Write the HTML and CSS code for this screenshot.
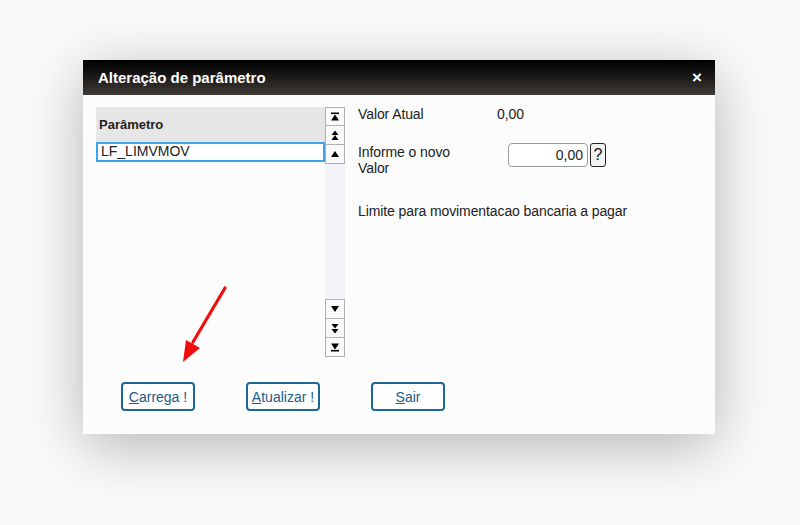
FILE: index.html
```html
<!DOCTYPE html>
<html>
  <head>
    <title>Alteração de parâmetro</title>
    <link rel="stylesheet" href="styles.css">
  </head>
  <body>
    <div class="dialog">
      <div class="titlebar">
        <span class="title">Alteração de parâmetro</span>
        <span class="close">&times;</span>
      </div>

      <div class="content">
        <div class="main">
          <div class="list">
            <div class="grid">
              <div class="grid-head">Parâmetro</div>
              <div class="grid-row selected">LF_LIMVMOV</div>
            </div>
            <div class="scroller">
              <div class="sbtn">
                <svg width="10" height="10" viewBox="0 0 10 10"><rect x="1" y="0.5" width="8" height="1.6"/><path d="M5 2.5 L9 8.5 H1 Z"/></svg>
              </div>
              <div class="sbtn">
                <svg width="10" height="11" viewBox="0 0 10 11"><path d="M5 0.5 L8.5 5 H1.5 Z"/><path d="M5 5 L8.5 10 H1.5 Z"/></svg>
              </div>
              <div class="sbtn">
                <svg width="10" height="8" viewBox="0 0 10 8"><path d="M5 1 L9 7 H1 Z"/></svg>
              </div>
              <div class="track"></div>
              <div class="sbtn">
                <svg width="10" height="8" viewBox="0 0 10 8"><path d="M1 1 H9 L5 7 Z"/></svg>
              </div>
              <div class="sbtn">
                <svg width="10" height="11" viewBox="0 0 10 11"><path d="M1.5 1 H8.5 L5 5.5 Z"/><path d="M1.5 6 H8.5 L5 10.5 Z"/></svg>
              </div>
              <div class="sbtn">
                <svg width="10" height="10" viewBox="0 0 10 10"><path d="M1 1.5 H9 L5 7.5 Z"/><rect x="1" y="7.9" width="8" height="1.6"/></svg>
              </div>
            </div>
          </div>

          <div class="form">
            <div class="field">
              <span class="label">Valor Atual</span>
              <span class="value">0,00</span>
            </div>
            <div class="field edit">
              <span class="label narrow">Informe o novo Valor</span>
              <input class="amount" type="text" value="0,00">
              <button class="help">?</button>
            </div>
            <div class="description">Limite para movimentacao bancaria a pagar</div>
          </div>
        </div>

        <div class="actions">
          <button class="action"><u>C</u>arrega !</button>
          <button class="action"><u>A</u>tualizar !</button>
          <button class="action"><u>S</u>air</button>
        </div>
      </div>
    </div>

    <svg class="arrow" width="60" height="90" viewBox="0 0 60 90">
      <line x1="48" y1="4" x2="16" y2="58" stroke="#f20d0d" stroke-width="3.2" stroke-linecap="round"/>
      <path d="M6 78 L9 56 L23 64 Z" fill="#f20d0d"/>
    </svg>
  </body>
</html>
```

FILE: styles.css
```css
* {
  box-sizing: border-box;
}

body {
  margin: 0;
  min-height: 525px;
  background: #fafafa;
  font-family: 'Liberation Sans', Arial, sans-serif;
  font-size: 14px;
  color: #222;
  position: relative;
  overflow: hidden;
}

.dialog {
  width: 632px;
  margin: 60px 0 0 83px;
  background: #fcfcfc;
  box-shadow: 0 12px 55px rgba(0, 0, 0, 0.28);
}

.titlebar {
  height: 35px;
  display: flex;
  align-items: center;
  justify-content: space-between;
  padding: 0 13px 0 15px;
  background: linear-gradient(180deg, #000 0%, #1a1816 45%, #3e3a36 100%);
  color: #fff;
}

.title {
  font-weight: 700;
  font-size: 15px;
}

.close {
  font-weight: 700;
  font-size: 17px;
  line-height: 1;
}

.content {
  padding: 12px 13px 23px 13px;
}

.main {
  display: flex;
  gap: 13px;
}

.list {
  display: flex;
  width: 249px;
  height: 250px;
}

.grid {
  width: 229px;
}

.grid-head {
  height: 35px;
  background: #e6e6e6;
  font-weight: 700;
  font-size: 13px;
  display: flex;
  align-items: center;
  padding-left: 3px;
}

.grid-row {
  height: 20px;
  line-height: 15px;
  padding-left: 3px;
  font-size: 14px;
}

.grid-row.selected {
  border: 2px solid #3ea4e8;
  background: #fff;
}

.scroller {
  width: 20px;
  display: flex;
  flex-direction: column;
}

.sbtn {
  height: 19px;
  border: 1px solid #b0b0b0;
  border-top-width: 0;
  background: #fafafa;
  display: flex;
  align-items: center;
  justify-content: center;
}

.sbtn:first-child {
  border-top-width: 1px;
}

.sbtn svg {
  fill: #000;
}

.track {
  flex: 1;
  background: #f3f4f7;
  border-bottom: 1px solid #b0b0b0;
}

.form {
  flex: 1;
  margin-top: -1px;
  letter-spacing: -0.1px;
}

.field {
  display: flex;
  align-items: flex-start;
  line-height: 16px;
}

.label {
  width: 139px;
}

.label.narrow {
  width: 110px;
  padding-top: 2px;
}

.field.edit {
  margin-top: 20px;
}

.amount {
  width: 80px;
  height: 24px;
  margin-left: 40px;
  margin-top: 1px;
  border: 1px solid #9a9a9a;
  border-radius: 4px;
  background: #fff;
  font-family: inherit;
  font-size: 14px;
  color: #222;
  text-align: right;
  padding: 0 4px;
}

.help {
  width: 16px;
  height: 24px;
  margin-left: 2px;
  margin-top: 1px;
  padding: 0;
  border: 1px solid #222;
  border-radius: 3px;
  background: #f2f2f2;
  font-family: inherit;
  font-size: 16px;
  color: #111;
}

.description {
  margin-top: 27px;
  line-height: 16px;
}

.actions {
  display: flex;
  gap: 51px;
  margin-top: 25px;
  padding-left: 25px;
}

.action {
  width: 74px;
  height: 29px;
  padding: 0;
  background: #fff;
  border: 2px solid #1c6796;
  border-radius: 4px;
  font-family: inherit;
  font-size: 14px;
  color: #1b5c88;
}

.arrow {
  position: absolute;
  left: 177px;
  top: 284px;
}
```
